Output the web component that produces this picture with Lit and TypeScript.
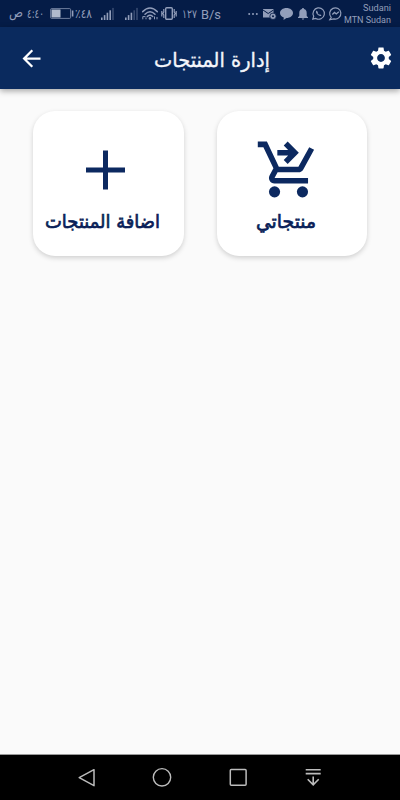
import { LitElement, html, css, svg } from "lit";

// Text run fitted to a given width, baseline at y.
const fit = (w: number, h: number, y: number, size: number, text: string, cls = "") => html`
  <svg class="fit ${cls}" width=${w} height=${h} viewBox="0 0 ${w} ${h}">
    <text x=${w / 2} y=${y} font-size=${size} text-anchor="middle" textLength=${w} lengthAdjust="spacingAndGlyphs">${text}</text>
  </svg>`;

const icon = (w: number, h: number, box: string, body: unknown) => html`
  <svg class="icon" width=${w} height=${h} viewBox=${box}>${body}</svg>`;

const signal = (lit: number) => icon(13, 13, "0 0 13 13", svg`
  ${[0, 1, 2, 3, 4].map((i) => svg`<rect x=${i * 2.8} y=${10.5 - i * 2.4} width="1.6" height=${2.5 + i * 2.4}
    fill="currentColor" opacity=${i < lit ? 1 : 0.35} />`)}`);

class StatusBar extends LitElement {
  static styles = css`
    :host { display: block; height: 27px; background: #051c47; color: #929eba; }
    .bar { display: flex; height: 27px; align-items: center; padding: 0 9px; box-sizing: border-box; }
    svg { display: block; flex: none; overflow: visible; }
    .fit { fill: currentColor; font-family: "DejaVu Sans", sans-serif; }
    .latin { font-family: Roboto, sans-serif; }
    .g1 { margin-left: 4px; } .g2 { margin-left: 5px; } .g3 { margin-left: 6px; }
    .g4 { margin-left: 9px; } .g0 { margin-left: 1px; } .g5 { margin-left: 11px; }
    .g3w { margin-left: 3px; }
    .push { margin-left: auto; }
    .net { margin-left: 2px; display: flex; flex-direction: column; align-items: flex-end; }
  `;
  render() {
    return html`<div class="bar">
      ${fit(14, 16, 11, 13, "ص")}
      <div class="g1">${fit(17, 16, 12, 12.5, "٤:٤٠")}</div>
      <div class="g3">${icon(24, 11, "0 0 24 11", svg`
        <rect x=".6" y=".6" width="20" height="9.8" rx="1" fill="none" stroke="currentColor" stroke-opacity=".75"/>
        <rect x="1.500" y="1.500" width="9" height="8" fill="#b2bbcd"/>
        <rect x="21.800" y="2.500" width="1.600" height="6" fill="currentColor"/>`)}</div>
      <div class="g0">${fit(17, 16, 12, 12.5, "٪٤٨")}</div>
      <div class="g4">${signal(4)}</div>
      <div class="g5">${signal(3)}</div>
      <div class="g1">${icon(16, 13, "0 0 16 13", svg`
        <g fill="none" stroke="currentColor" stroke-width="1.500" stroke-linecap="round">
          <path d="M.7 4.600Q8-2.600 15.300 4.600M3 7.200Q8 2.400 13 7.200M5.300 9.500Q8 7 10.700 9.500"/></g>
        <circle cx="8" cy="11.400" r="1.300" fill="currentColor"/>
        <path d="M.8 12.300V9.600h2.600M4 12.300V10.500M12.500 9.500v2.800M15 10v2.300" stroke="currentColor" fill="none"/>`)}</div>
      <div class="g3w">${icon(16, 13, "0 0 16 13", svg`
        <g fill="none" stroke="currentColor" stroke-width="1.400">
          <rect x="4.700" y=".8" width="6.600" height="11.400" rx="1"/>
          <path d="M2.800 2v3l-1 1.500 1 1.500v3M.8 4v5.500M13.200 2v3l1 1.500-1 1.500v3M15.200 4v5.500" stroke-width="1.200"/></g>`)}</div>
      <div class="g2">${fit(15, 16, 12, 12, "١٢٧")}</div>
      <div class="g1">${fit(20, 16, 13, 13.5, "B/s", "latin")}</div>
      <div class="push">${icon(10, 4, "0 0 10 4", svg`
        <g fill="currentColor"><circle cx="1.200" cy="2" r="1"/><circle cx="5" cy="2" r="1"/><circle cx="8.800" cy="2" r="1"/></g>`)}</div>
      <div class="g2">${icon(13, 12, "0 0 13 12", svg`
        <path fill="currentColor" d="M0 1h10.500v8.500H0z"/><path d="M0 2l5.200 3.500L10.500 2" fill="none" stroke="#051c47"/>
        <circle cx="10" cy="8.300" r="3.200" fill="currentColor" stroke="#051c47" stroke-width=".8"/><circle cx="10" cy="8.300" r="1" fill="#051c47"/>`)}</div>
      <div class="g1">${icon(13, 12, "0 0 13 12", svg`
        <path fill="currentColor" d="M6.500 0C10.200 0 13 2.200 13 5s-2.800 5-6.500 5l-3 2 .3-2.600C1.500 8.700 0 7 0 5 0 2.200 2.800 0 6.500 0z"/>`)}</div>
      <div class="g2">${icon(10, 12, "0 0 10 12", svg`
        <path fill="currentColor" d="M5 0c.7 0 1 .5 1 1 2 .6 2.700 2 2.700 4v3l1.300 1.300V10H0v-.700L1.300 8V5c0-2 .7-3.400 2.700-4 0-.5.300-1 1-1zM3.800 10.600h2.400C6.200 12 3.800 12 3.800 10.600z"/>`)}</div>
      <div class="g1">${icon(13, 13, "0 0 13 13", svg`
        <path d="M.8 12.200l.9-3A5.700 5.700 0 1 1 3.800 11.400z" fill="none" stroke="currentColor" stroke-width="1.200"/>
        <path d="M4.500 3.500c-1 1-.5 2.600.9 4s3 2 4.100.9l-1.500-1.200-.9.600-1.600-1.700.6-.9z" fill="currentColor"/>`)}</div>
      <div class="g1">${icon(13, 13, "0 0 13 13", svg`
        <path d="M2.200 10.300A5.600 5.600 0 1 1 5 11.900L.8 12.600z" fill="none" stroke="currentColor" stroke-width="1.200"/>
        <path d="M3.300 7.400l2.200-2 1.800 1.600 2.500-2.200" fill="none" stroke="currentColor" stroke-width="1.300"/>`)}</div>
      <div class="net">
        ${fit(28, 12, 8.5, 9.5, "Sudani", "latin")}
        ${fit(47, 12, 9, 9.5, "MTN Sudan", "latin")}
      </div>
    </div>`;
  }
}
customElements.define("status-bar", StatusBar);

class ProductCard extends LitElement {
  static properties = { kind: {}, label: {}, width: { type: Number } };
  declare kind: string;
  declare label: string;
  declare width: number;
  static styles = css`
    :host { display: block; width: 151px; height: 145px; border-radius: 22px; background: #fff; color: #0c2960;
      box-shadow: 0 2px 5px rgba(0, 0, 0, .17); }
    .body { display: flex; flex-direction: column; align-items: center; padding-top: 25px; }
    .add { margin-right: 5px; } .cart { margin-right: 6px; }
    svg { display: block; overflow: visible; }
    .fit { margin-top: 5px; fill: #0a1f58; stroke: #0a1f58; stroke-width: .7; font-family: "DejaVu Sans", sans-serif; }
    .label { display: block; }
    .label.add, .label.cart { margin-right: 12px; }
  `;
  render() {
    return html`<div class="body">
      <div class=${this.kind}>${this.kind === "add"
        ? icon(67, 67, "0 0 67 67", svg`<path d="M33.500 14.500v39M14 34h39" stroke="currentColor" stroke-width="5"/>`)
        : icon(67, 67, "0 0 24 24", svg`<g fill="currentColor"><path d="M1 2v2h2l3.600 7.590-1.350 2.440C4.520 15.370 5.480 17 7 17h12v-2H7l1.100-2h7.450c.750 0 1.410-.410 1.750-1.030L21.160 4.960 19.420 4l-3.870 7H8.530L4.270 2z"/>
          <circle cx="7" cy="20" r="2"/><circle cx="17" cy="20" r="2"/>
          <path d="M11.700 2l4 4-4 4-1.410-1.410L11.870 7H8V5h3.870l-1.580-1.590z"/></g>`)}</div>
      <div class="label ${this.kind}">${fit(this.width, 30, 20, 19, this.label)}</div>
    </div>`;
  }
}
customElements.define("product-card", ProductCard);

class AppRoot extends LitElement {
  static styles = css`
    :host { display: flex; flex-direction: column; height: 800px; background: #fafafa; overflow: hidden; }
    svg { display: block; overflow: visible; }
    header { display: grid; grid-template-columns: 62px 1fr 38px; align-items: center; height: 62px; flex: none;
      background: #0a2a5e; color: #fff; box-shadow: 0 2px 6px rgba(0, 0, 0, .35); }
    .back { justify-self: center; }
    .gear { justify-self: center; }
    .title { margin: 8px 0 0 92px; }
    .fit { fill: #f4f6fb; stroke: #f4f6fb; stroke-width: .35; font-family: "DejaVu Sans", sans-serif; }
    main { flex: 1; display: flex; gap: 33px; align-items: flex-start; padding: 22px 33px; }
    nav { flex: none; height: 45px; background: #000; border-top: 1px solid #999; box-sizing: content-box;
      display: flex; align-items: center; justify-content: space-between; padding: 0 77px; color: #bcbcbc; }
  `;
  render() {
    return html`
      <status-bar></status-bar>
      <header>
        <div class="back">${icon(27, 27, "0 0 24 24", svg`<path fill="currentColor" d="M20 11H7.830l5.590-5.590L12 4l-8 8 8 8 1.410-1.410L7.830 13H20z"/>`)}</div>
        <div class="title">${fit(116, 30, 20, 20, "إدارة المنتجات")}</div>
        <div class="gear">${icon(26, 26, "0 0 24 24", svg`<path fill="currentColor" d="M19.140 12.940c.04-.3.06-.61.06-.94 0-.32-.02-.64-.07-.94l2.030-1.580c.18-.14.23-.41.12-.61l-1.920-3.320c-.12-.22-.37-.29-.59-.22l-2.390.96c-.5-.38-1.030-.7-1.620-.94l-.36-2.540c-.04-.24-.24-.41-.48-.41h-3.840c-.24 0-.43.17-.47.41l-.36 2.540c-.59.24-1.130.57-1.620.94l-2.390-.96c-.22-.08-.47 0-.59.22L2.740 8.870c-.12.21-.08.47.12.61l2.030 1.580c-.05.3-.09.63-.09.94s.02.64.07.94l-2.030 1.580c-.18.14-.23.41-.12.61l1.920 3.320c.12.22.37.29.59.22l2.390-.96c.5.38 1.030.7 1.620.94l.36 2.540c.05.24.24.41.48.41h3.840c.24 0 .44-.17.47-.41l.36-2.540c.59-.24 1.130-.56 1.620-.94l2.390.96c.22.08.47 0 .59-.22l1.920-3.320c.12-.22.07-.47-.12-.61l-2.010-1.580zM12 15.600c-1.980 0-3.600-1.620-3.600-3.600s1.620-3.600 3.600-3.600 3.600 1.620 3.600 3.600-1.620 3.600-3.600 3.600z"/>`)}</div>
      </header>
      <main>
        <product-card kind="add" label="اضافة المنتجات" .width=${115}></product-card>
        <product-card kind="cart" label="منتجاتي" .width=${60}></product-card>
      </main>
      <nav>
        ${icon(20, 20, "0 0 20 20", svg`<path d="M17 1.700v16L2.200 9.700z" fill="none" stroke="currentColor" stroke-width="1.500" stroke-linejoin="round"/>`)}
        ${icon(20, 20, "0 0 20 20", svg`<circle cx="10" cy="9.300" r="8.700" fill="none" stroke="currentColor" stroke-width="1.400"/>`)}
        ${icon(20, 20, "0 0 20 20", svg`<rect x="2.300" y="1.500" width="15.800" height="15.800" rx="1" fill="none" stroke="currentColor" stroke-width="1.500"/>`)}
        ${icon(20, 20, "0 0 20 20", svg`<path d="M2.700 1.800h15M2.700 5.600h15M10.200 8.500v8.500M4.700 11.200l5.500 5.600 5.500-5.600" fill="none" stroke="currentColor" stroke-width="1.600"/>`)}
      </nav>`;
  }
}
customElements.define("app-root", AppRoot);
